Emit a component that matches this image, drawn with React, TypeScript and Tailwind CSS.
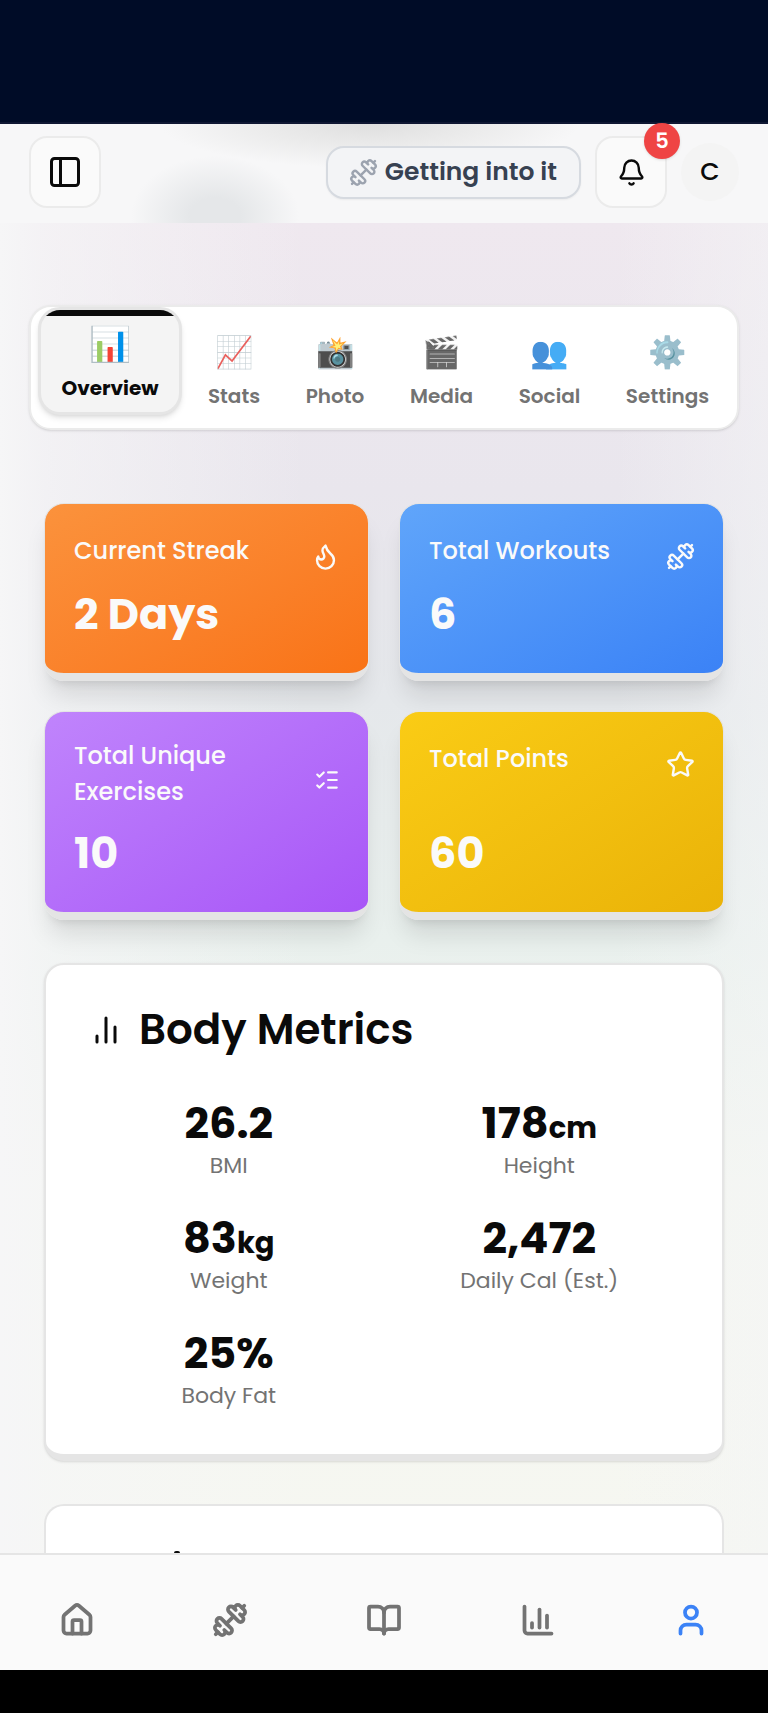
import React from "react";
import {
  Bell,
  BookOpen,
  ChartColumn,
  Dumbbell,
  Flame,
  House,
  ListChecks,
  PanelLeft,
  Star,
  User,
  type LucideIcon,
} from "lucide-react";

const tabs = [
  { icon: "📊", label: "Overview" },
  { icon: "📈", label: "Stats" },
  { icon: "📸", label: "Photo" },
  { icon: "🎬", label: "Media" },
  { icon: "👥", label: "Social" },
  { icon: "⚙️", label: "Settings" },
];

type Stat = {
  title: string;
  value: string;
  icon: LucideIcon;
  iconSize: number;
  tone: string;
};

const stats: Stat[] = [
  { title: "Current Streak", value: "2 Days", icon: Flame, iconSize: 29, tone: "from-[#fb923c] to-[#f97316]" },
  { title: "Total Workouts", value: "6", icon: Dumbbell, iconSize: 29, tone: "from-[#60a5fa] to-[#3b82f6]" },
  { title: "Total Unique Exercises", value: "10", icon: ListChecks, iconSize: 26, tone: "from-[#c084fc] to-[#a855f7]" },
  { title: "Total Points", value: "60", icon: Star, iconSize: 29, tone: "from-[#facc15] to-[#eab308]" },
];

const metrics = [
  { value: "26.2", unit: "", label: "BMI" },
  { value: "178", unit: "cm", label: "Height" },
  { value: "83", unit: "kg", label: "Weight" },
  { value: "2,472", unit: "", label: "Daily Cal (Est.)" },
  { value: "25%", unit: "", label: "Body Fat" },
];

const navItems = [
  { icon: House, label: "Home" },
  { icon: Dumbbell, label: "Workouts" },
  { icon: BookOpen, label: "Library" },
  { icon: ChartColumn, label: "Progress" },
  { icon: User, label: "Profile" },
];

function Header() {
  return (
    <header className="flex h-[99px] items-center justify-between bg-[#f7f7f8] bg-[radial-gradient(ellipse_210px_44px_at_370px_0px,#dfdfdf,#ebebeb_50%,#f7f7f800),radial-gradient(ellipse_84px_60px_at_215px_92px,#e5e7e9_30%,#f7f7f800)] px-[29px] pb-[3px]">
      <button aria-label="Toggle sidebar" className="flex size-[72px] items-center justify-center rounded-[18px] border-2 border-[#ebebeb] bg-[#fafafa] text-[#0a0a0a]">
        <PanelLeft size={36} strokeWidth={2} />
      </button>
      <div className="flex items-center gap-[14px]">
        <div className="flex h-[53px] items-center gap-[7px] rounded-[18px] border-2 border-[#d6dae0] bg-[#f3f4f6] pr-[22px] pl-[21px] text-[#374151] shadow-xs">
          <Dumbbell size={29} className="text-[#9ca3af]" />
          <span className="text-[25px] font-semibold">Getting into it</span>
        </div>
        <button aria-label="Notifications" className="relative flex size-[72px] items-center justify-center rounded-[18px] border-2 border-[#ebebeb] bg-[#fafafa] text-[#0a0a0a]">
          <Bell size={29} />
          <span className="absolute -top-[15px] -right-[15px] flex size-9 items-center justify-center rounded-full bg-[#ef4444] text-[21px] font-semibold text-white shadow-sm">5</span>
        </button>
        <button aria-label="Account" className="flex size-[58px] items-center justify-center rounded-full bg-[#f4f4f4] text-[25px] font-medium text-[#0a0a0a]">C</button>
      </div>
    </header>
  );
}

function Tabs() {
  return (
    <div role="tablist" className="mx-[29px] grid h-[125px] grid-cols-[147fr_98fr_104fr_109fr_107fr_129fr] rounded-[22px] border-2 border-[#ebebeb] bg-white pr-[5px] pl-[7px] shadow-sm">
      {tabs.map((tab, i) =>
        i === 0 ? (
          <button key={tab.label} role="tab" aria-selected="true" className="mr-[3px] flex h-[108px] flex-col items-center overflow-hidden rounded-[22px] border-3 border-[#e5e5e5] bg-[#f4f4f4] text-[#0a0a0a] shadow-md">
            <span className="h-[6px] w-full shrink-0 bg-[#0a0a0a]" />
            <span className="mt-[7px] text-[34px] leading-[42px]">{tab.icon}</span>
            <span className="mt-[7px] text-[20px] leading-[32px] font-bold">{tab.label}</span>
          </button>
        ) : (
          <button key={tab.label} role="tab" aria-selected="false" className="flex flex-col items-center pt-[24px] text-[#737373]">
            <span className="text-[31px] leading-[42px] opacity-80">{tab.icon}</span>
            <span className="mt-[7px] text-[20px] leading-[32px] font-semibold">{tab.label}</span>
          </button>
        ),
      )}
    </div>
  );
}

function StatCard({ title, value, icon: Icon, iconSize, tone }: Stat) {
  return (
    <article className={`flex flex-col justify-between gap-[11px] rounded-[20px] border border-b-[8px] border-[#e4e4e4] bg-linear-to-br pt-[26px] pr-[28px] pb-[26px] pl-[29px] text-[#fafafa] shadow-xl ${tone}`}>
      <div className="flex min-h-[41px] items-center justify-between gap-4">
        <h3 className="text-[24px] leading-9 font-medium">{title}</h3>
        <Icon size={iconSize} className="mt-3 shrink-0" />
      </div>
      <p className="text-[43px] leading-[65px] font-bold">{value}</p>
    </article>
  );
}

function BodyMetrics() {
  return (
    <section className="rounded-[20px] border-2 border-b-[7px] border-[#e5e5e5] bg-white px-[42px] pt-[40px] pb-[42px] text-[#0a0a0a] shadow-sm">
      <h2 className="flex items-center gap-[15px] text-[42px] leading-[50px] font-semibold">
        <svg viewBox="0 0 24 24" className="size-9" fill="none" stroke="currentColor" strokeWidth="2" strokeLinecap="round">
          <path d="M18 20V10M12 20V4M6 20v-4" />
        </svg>
        Body Metrics
      </h2>
      <dl className="mt-[41px] grid grid-cols-2 gap-x-[29px] gap-y-[29px] text-center">
        {metrics.map((m) => (
          <div key={m.label} className="flex flex-col-reverse">
            <dt className="text-[22px] leading-8 text-[#737373]">{m.label}</dt>
            <dd className="text-[43px] leading-[54px] font-bold">
              {m.value}
              <span className="text-[29px] leading-none">{m.unit}</span>
            </dd>
          </div>
        ))}
      </dl>
    </section>
  );
}

export default function App() {
  return (
    <div className="flex min-h-screen flex-col bg-black font-['Poppins','Inter',sans-serif]">
      <div className="h-[124px] border-b-2 border-[#0f1733] bg-[#000c27]" />
      <Header />
      <main className="flex flex-1 flex-col bg-[linear-gradient(90deg,#f6f6f7_0%,#f6f6f7b0_6%,#f6f6f700_40%,#f6f6f700_80%,#f4f5f680_100%),linear-gradient(180deg,#efe8ef_0%,#e9e6ed_20%,#e5e8eb_36%,#e9f0ed_54%,#f4f6f1_72%,#f6f7f1_100%)] pt-[82px]">
        <Tabs />
        <div className="mx-[44px] mt-[73px] flex flex-1 flex-col">
          <div className="grid grid-cols-2 gap-[30px]">
            {stats.map((s) => (
              <StatCard key={s.title} {...s} />
            ))}
          </div>
          <div className="mt-[43px]">
            <BodyMetrics />
          </div>
          <div className="mt-[43px] flex flex-1 items-end rounded-t-[20px] border-2 border-b-0 border-[#e5e5e5] bg-white pl-[128px]">
            <span className="h-[2px] w-[6px] rounded-t-full bg-[#0a0a0a]" />
          </div>
        </div>
      </main>
      <nav className="mb-[43px] grid h-[117px] grid-cols-5 border-t-2 border-[#e5e5e5] bg-[#fafafa] pt-[14px]">
        {navItems.map(({ icon: Icon, label }) => (
          <a key={label} href="#" aria-label={label} className={`flex items-center justify-center ${label === "Profile" ? "text-[#3b82f6]" : "text-[#737373]"}`}>
            <Icon size={36} strokeWidth={2.5} />
          </a>
        ))}
      </nav>
    </div>
  );
}
